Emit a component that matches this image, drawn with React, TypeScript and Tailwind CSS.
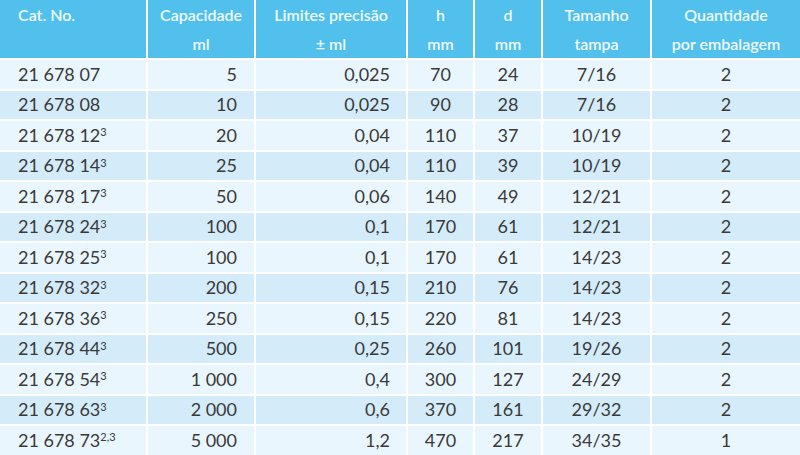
const rows: [string, string, string, string, string, string, string, string][] = [
  ['21 678 07', '', '5', '0,025', '70', '24', '7/16', '2'],
  ['21 678 08', '', '10', '0,025', '90', '28', '7/16', '2'],
  ['21 678 12', '3', '20', '0,04', '110', '37', '10/19', '2'],
  ['21 678 14', '3', '25', '0,04', '110', '39', '10/19', '2'],
  ['21 678 17', '3', '50', '0,06', '140', '49', '12/21', '2'],
  ['21 678 24', '3', '100', '0,1', '170', '61', '12/21', '2'],
  ['21 678 25', '3', '100', '0,1', '170', '61', '14/23', '2'],
  ['21 678 32', '3', '200', '0,15', '210', '76', '14/23', '2'],
  ['21 678 36', '3', '250', '0,15', '220', '81', '14/23', '2'],
  ['21 678 44', '3', '500', '0,25', '260', '101', '19/26', '2'],
  ['21 678 54', '3', '1 000', '0,4', '300', '127', '24/29', '2'],
  ['21 678 63', '3', '2 000', '0,6', '370', '161', '29/32', '2'],
  ['21 678 73', '2,3', '5 000', '1,2', '470', '217', '34/35', '1'],
]

function HeadCell({ top, bottom }: { top: string; bottom: string }) {
  return (
    <div className="bg-[#52c0ec] flex flex-col items-center justify-center text-[16px] font-semibold leading-[29px] text-[#eef9fe]">
      <span>{top}</span>
      <span>{bottom}</span>
    </div>
  )
}

export default function App() {
  return (
    <div
      className="w-[800px] h-[455px] overflow-hidden bg-white"
      style={{ fontFamily: 'Lato, "Open Sans", sans-serif' }}
    >
      <div className="grid grid-cols-[146px_106px_150px_65px_66px_107px_148px] grid-rows-[58px] auto-rows-[28.5px] gap-[2px]">
        <div className="bg-[#52c0ec] pl-[18px] text-[16px] font-semibold leading-[29px] text-[#eef9fe]">
          Cat. No.
        </div>
        <HeadCell top="Capacidade" bottom="ml" />
        <HeadCell top="Limites precisão" bottom="± ml" />
        <HeadCell top="h" bottom="mm" />
        <HeadCell top="d" bottom="mm" />
        <HeadCell top="Tamanho" bottom="tampa" />
        <HeadCell top="Quantidade" bottom="por embalagem" />

        {rows.map((r, i) => {
          const bg = i % 2 === 0 ? 'bg-[#eaf6fd]' : 'bg-[#d4ecf9]'
          const cell = `${bg} flex items-center text-[18px] text-[#3a3a3a]`
          return [
            <div key={`${i}a`} className={`${cell} pl-[18px]`}>
              <span>
                {r[0]}
                {r[1] && <sup className="text-[11px] leading-none">{r[1]}</sup>}
              </span>
            </div>,
            <div key={`${i}b`} className={`${cell} justify-end pr-[17px]`}>{r[2]}</div>,
            <div key={`${i}c`} className={`${cell} justify-end pr-[16px]`}>{r[3]}</div>,
            <div key={`${i}d`} className={`${cell} justify-center`}>{r[4]}</div>,
            <div key={`${i}e`} className={`${cell} justify-center`}>{r[5]}</div>,
            <div key={`${i}f`} className={`${cell} justify-center`}>{r[6]}</div>,
            <div key={`${i}g`} className={`${cell} justify-center`}>{r[7]}</div>,
          ]
        })}
      </div>
    </div>
  )
}
